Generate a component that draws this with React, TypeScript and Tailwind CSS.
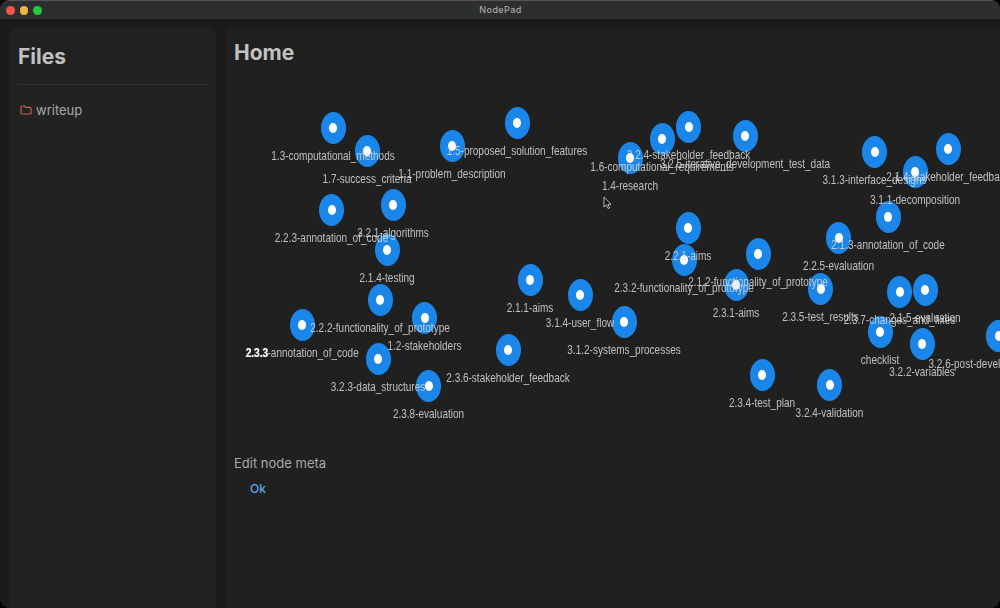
const nodes: [string, number, number][] = [
  ["1.3-computational_methods", 333, 128],
  ["1.7-success_criteria", 367, 151],
  ["1.1-problem_description", 452, 146],
  ["1.5-proposed_solution_features", 517, 123],
  ["2.2.3-annotation_of_code", 331.5, 210],
  ["3.2.1-algorithms", 393, 205],
  ["2.1.4-testing", 387, 250],
  ["2.2.2-functionality_of_prototype", 380, 300],
  ["1.2-stakeholders", 424.5, 318],
  ["2.3.3-annotation_of_code", 302, 325],
  ["3.2.3-data_structures", 378, 359],
  ["2.3.8-evaluation", 428.5, 386],
  ["2.3.6-stakeholder_feedback", 508, 350],
  ["2.1.1-aims", 530, 280],
  ["3.1.4-user_flow", 580, 295],
  ["3.1.2-systems_processes", 624, 322],
  ["1.6-computational_requirements", 662, 139],
  ["1.4-research", 630, 158],
  ["2.2.4-stakeholder_feedback", 688.5, 127],
  ["3.2.5-iterative_development_test_data", 745, 136],
  ["2.2.1-aims", 688, 228],
  ["2.3.2-functionality_of_prototype", 684, 260],
  ["2.1.2-functionality_of_prototype", 758, 254],
  ["2.3.1-aims", 736, 285],
  ["2.3.5-test_results", 820.5, 289],
  ["2.3.4-test_plan", 762, 375],
  ["3.2.4-validation", 829.5, 385],
  ["3.1.3-interface_designs", 874.5, 152],
  ["2.1.4-stakeholder_feedback", 948, 149],
  ["3.1.1-decomposition", 915, 172],
  ["2.1.3-annotation_of_code", 888, 217],
  ["2.2.5-evaluation", 838.5, 238],
  ["2.3.7-changes_and_fixes", 899.5, 292],
  ["2.1.5-evaluation", 925, 290],
  ["checklist", 880, 332],
  ["3.2.2-variables", 922, 344],
  ["3.2.6-post-development_testing", 998.5, 336],
];

const OX = 225;
const OY = 76;

function Folder() {
  return (
    <svg width="12" height="10" viewBox="0 0 12 10" fill="none" stroke="#c4604f" strokeWidth="1.2" strokeLinejoin="round">
      <path d="M1 2c0-.6.4-1 1-1h2.4l1.1 1.4H10c.6 0 1 .4 1 1V8c0 .6-.4 1-1 1H2c-.6 0-1-.4-1-1Z" />
    </svg>
  );
}

export default function App() {
  return (
    <div className="h-[608px] w-[1000px] overflow-hidden bg-black font-['Inter','Liberation_Sans',sans-serif]">
      <div className="flex h-full flex-col overflow-hidden rounded-[9px] border-t border-[#555] bg-[#1b1b1b]">
        <div className="relative flex h-[18px] shrink-0 items-center bg-[#2d2f2f] pl-[6px]">
          <div className="absolute left-[6px] top-[5px] flex gap-[5px]">
            <span className="h-[8.5px] w-[8.5px] rounded-full bg-[#f4544c]" />
            <span className="h-[8.5px] w-[8.5px] rounded-full bg-[#efb33e]" />
            <span className="h-[8.5px] w-[8.5px] rounded-full bg-[#28c840]" />
          </div>
          <span className="flex-1 pr-[5px] text-center text-[9px] font-medium tracking-[0.4px] text-[#a8a8a8]">NodePad</span>
        </div>
        <div className="flex flex-1 gap-[9px] pl-[9px] pt-[9px]">
          <aside className="flex w-[207px] flex-col rounded-t-[6px] bg-[#212121]">
            <h2 className="h-[56px] px-[9px] pt-[15px] text-[21px] leading-[28px] font-bold text-[#c0c0c0]">Files</h2>
            <div className="mx-[9px] h-px bg-[#303030]" />
            <div className="mx-[2px] mt-[9px] flex flex-1 items-start gap-[4px] rounded-t-[6px] bg-[#222222] px-[9px] pt-[7px] text-[#a9a9a9]">
              <span className="pt-[4px]"><Folder /></span>
              <span className="text-[13px] leading-[18px]">writeup</span>
            </div>
          </aside>
          <main className="flex flex-1 flex-col rounded-tl-[6px] bg-[#202020]">
            <h1 className="h-[48px] shrink-0 px-[9px] pt-[11px] text-[21px] leading-[28px] font-bold text-[#c0c0c0]">Home</h1>
            <div className="relative h-[366px] shrink-0 overflow-hidden blur-[0.35px]">
              {nodes.map(([label, x, y]) => (
                <div key={label + x} className="absolute" style={{ left: x - OX, top: y - OY }}>
                  <div className="absolute left-[-12.5px] top-[-16px] flex h-[32px] w-[25px] items-center justify-center rounded-[50%] bg-[#1a86ea]">
                    <div className="h-[10px] w-[8px] rounded-[50%] bg-white" />
                  </div>
                </div>
              ))}
              {nodes.map(([label, x, y]) => (
                <div
                  key={label + "t"}
                  className="absolute flex w-0 scale-y-[1.32] justify-center whitespace-nowrap font-['Liberation_Sans',sans-serif] text-[10px] leading-[14px] text-[#dcdcdc]/85"
                  style={{ left: x - OX, top: y - OY + 21 }}
                >
                  {label}
                </div>
              ))}
              <div
                className="absolute scale-y-[1.32] font-['Liberation_Sans',sans-serif] text-[10px] leading-[14px] font-bold text-white"
                style={{ left: 246 - OX, top: 325 - OY + 21 }}
              >
                2.3.3
              </div>
              <svg className="absolute" style={{ left: 603 - OX, top: 196 - OY }} width="9" height="14" viewBox="0 0 9 14">
                <path d="M1 1v10l2.4-2.2L5 12.5l1.6-.7L5 8.3h3Z" fill="#111" stroke="#ddd" strokeWidth="0.8" strokeLinejoin="round" />
              </svg>
            </div>
            <div className="px-[9px] pt-[12px] text-[13px] leading-[18px] text-[#a9a9a9]">Edit node meta</div>
            <div className="px-[25px] pt-[8px] text-[12px] leading-[18px] font-medium text-[#5aa7e8]">Ok</div>
          </main>
        </div>
      </div>
    </div>
  );
}
